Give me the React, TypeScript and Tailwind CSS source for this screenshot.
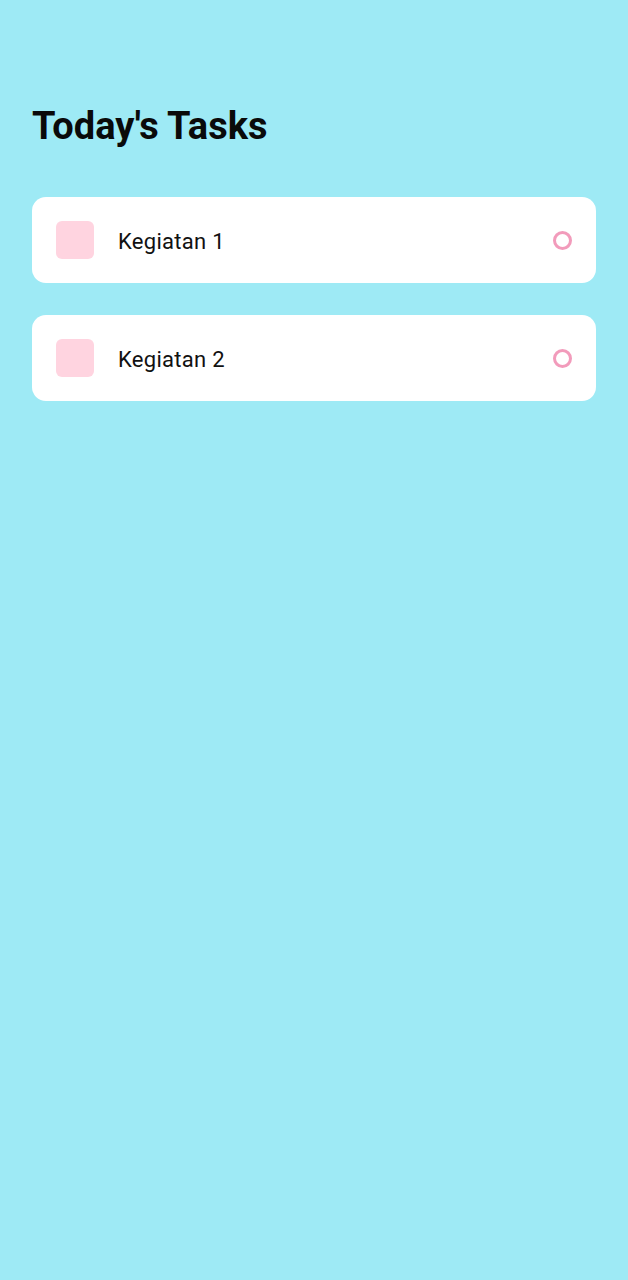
import React from "react";

const tasks = ["Kegiatan 1", "Kegiatan 2"];

export default function App() {
  return (
    <div
      className="min-h-[1280px] w-full bg-[#9eeaf5] px-8 pt-[102px]"
      style={{ fontFamily: "Roboto, 'Liberation Sans', sans-serif" }}
    >
      <h1 className="text-[38px] font-bold leading-[48px] text-[#0a0a0a]">
        Today's Tasks
      </h1>

      <div className="mt-[47px] flex flex-col gap-8">
        {tasks.map((t) => (
          <div
            key={t}
            className="flex h-[86px] items-center rounded-[14px] bg-white px-6"
          >
            <div className="h-[38px] w-[38px] rounded-[6px] bg-[#ffd4e0]" />
            <span className="ml-6 mt-[3px] flex-1 text-[22px] tracking-[0.3px] text-[#111]">
              {t}
            </span>
            <div className="h-[19px] w-[19px] rounded-full border-[3px] border-[#f29bbb]" />
          </div>
        ))}
      </div>
    </div>
  );
}
